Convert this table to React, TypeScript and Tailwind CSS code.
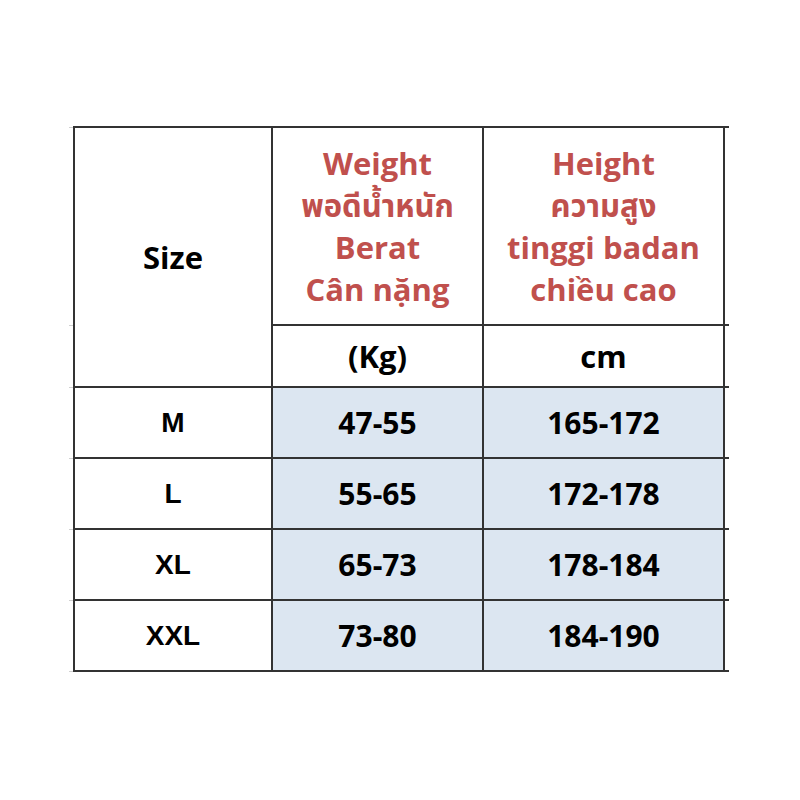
import React from "react";

const red = "text-[#c0504d]";
const sans = "font-['Open_Sans','Noto_Sans_Thai','Noto_Sans','Liberation_Sans',sans-serif]";
const arial = "font-['Liberation_Sans',Arial,sans-serif]";

const rows = [
  ["M", "47-55", "165-172"],
  ["L", "55-65", "172-178"],
  ["XL", "65-73", "178-184"],
  ["XXL", "73-80", "184-190"],
];

const cell = "border-2 border-[#333] text-center align-middle p-0";
const ext = "border-y-2 border-[#333] border-r-0 p-0 w-[5px]";
const lext = "border-y border-[#d0d0d0] border-l-0 p-0 w-[5px]";

export default function App() {
  return (
    <div className="w-[800px] h-[800px] bg-white relative">
      <div className="pt-[126px] pl-[69px]">
        <table className="border-collapse table-fixed">
          <colgroup>
            <col className="w-[5px]" />
            <col className="w-[198px]" />
            <col className="w-[211px]" />
            <col className="w-[241px]" />
            <col className="w-[5px]" />
          </colgroup>
          <tbody>
            <tr className="h-[198px]">
              <td className={lext}></td>
              <td rowSpan={2} className={`${cell} ${sans} font-bold text-[31px] text-black`}>
                Size
              </td>
              <td className={`${cell} ${sans} font-bold text-[31px] leading-[42px] ${red}`}>
                <div>Weight</div>
                <div>พอดีน้ำหนัก</div>
                <div>Berat</div>
                <div>Cân nặng</div>
              </td>
              <td className={`${cell} ${sans} font-bold text-[31px] leading-[42px] ${red}`}>
                <div>Height</div>
                <div>ความสูง</div>
                <div>tinggi badan</div>
                <div>chiều cao</div>
              </td>
              <td className={ext}></td>
            </tr>
            <tr className="h-[62px]">
              <td className={lext}></td>
              <td className={`${cell} ${sans} font-bold text-[31px] text-black`}>(Kg)</td>
              <td className={`${cell} ${sans} font-bold text-[31px] text-black`}>cm</td>
              <td className={ext}></td>
            </tr>
            {rows.map((r) => (
              <tr key={r[0]} className="h-[71px]">
                <td className={lext}></td>
                <td className={`${cell} ${arial} font-bold text-[28px] text-black`}>{r[0]}</td>
                <td className={`${cell} ${sans} font-bold text-[30px] text-black bg-[#dce6f1]`}>{r[1]}</td>
                <td className={`${cell} ${sans} font-bold text-[30px] text-black bg-[#dce6f1]`}>{r[2]}</td>
                <td className={ext}></td>
              </tr>
            ))}
          </tbody>
        </table>
      </div>
    </div>
  );
}
